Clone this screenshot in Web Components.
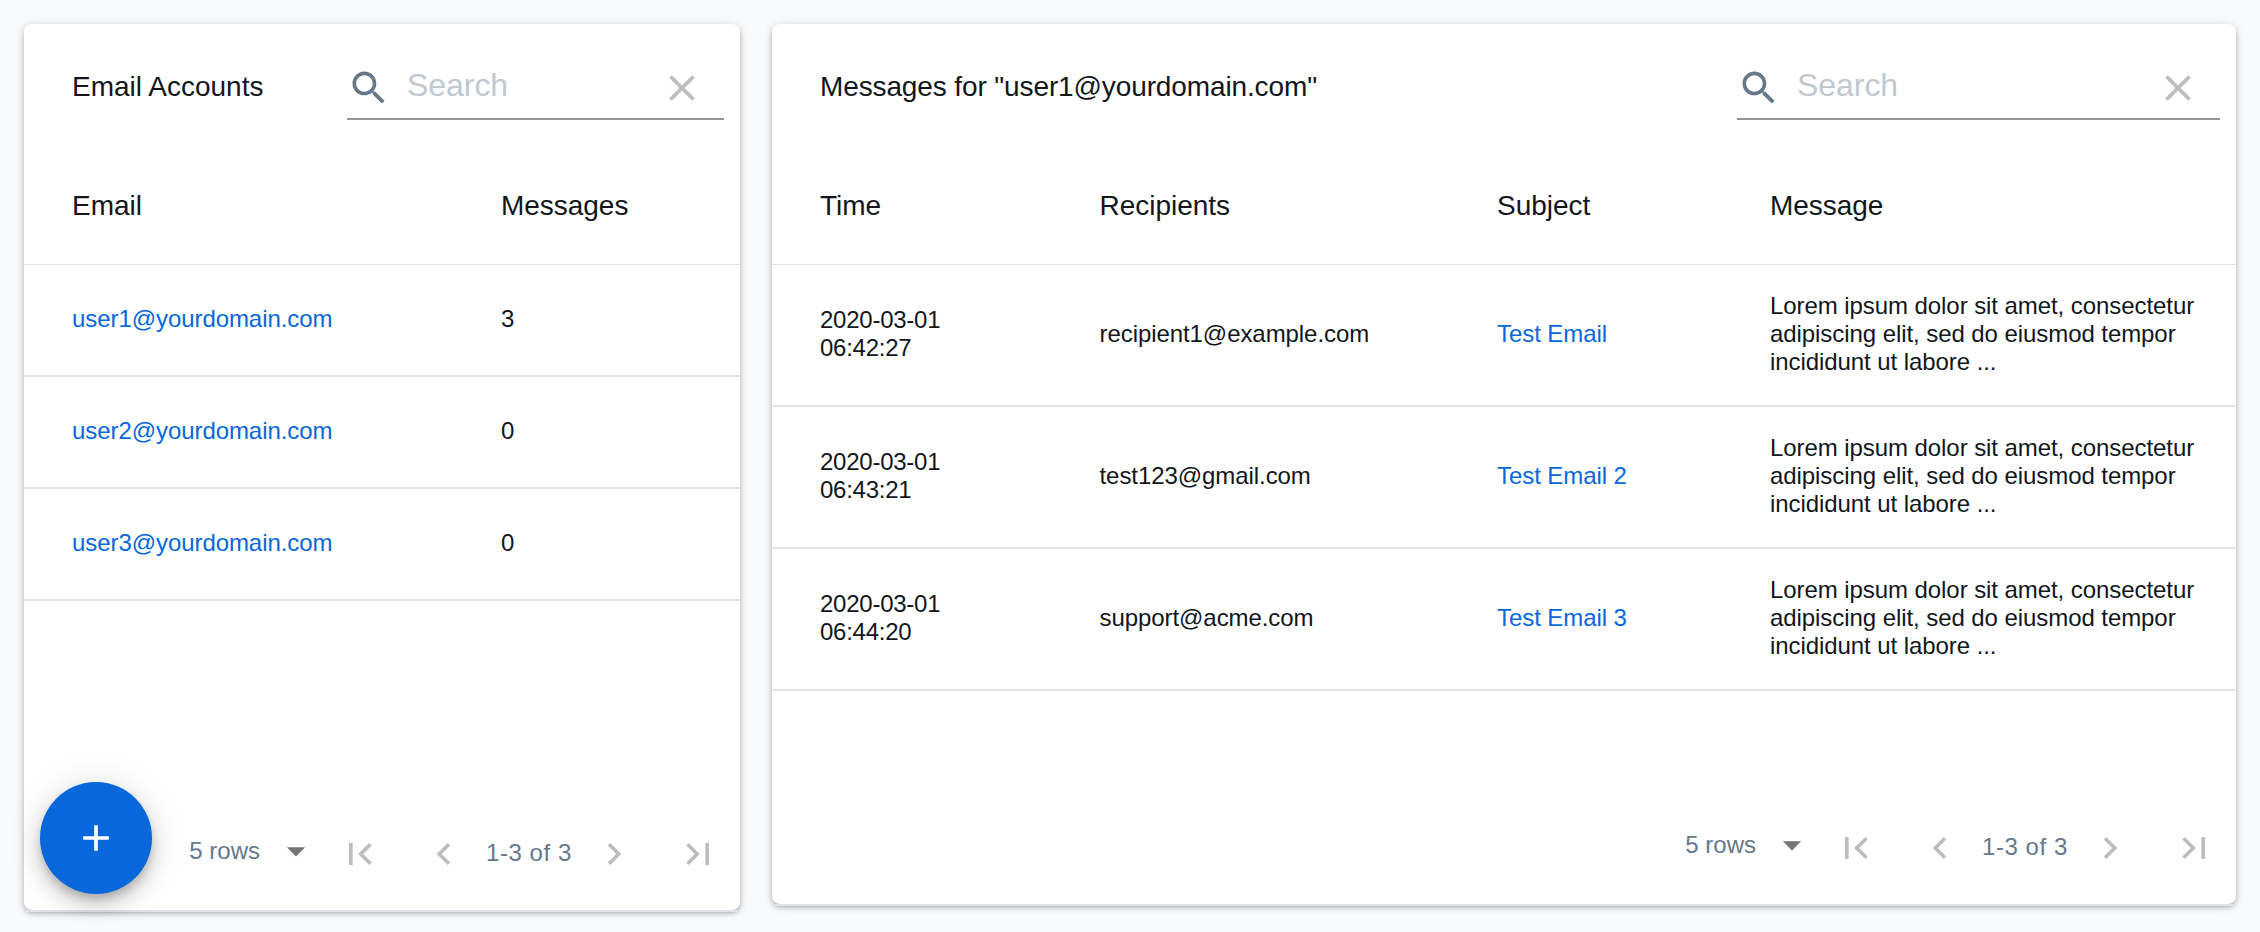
<!DOCTYPE html>
<html lang="en">
<head>
<meta charset="utf-8">
<title>Mail Dashboard</title>
<style>
  html, body { margin: 0; height: 100%; background: #f9fafc; }
  body { font-family: "Liberation Sans", Arial, sans-serif; color: #12161b; }
</style>
</head>
<body>
<mail-dashboard></mail-dashboard>
<script>
const ICONS = {
  search: 'M15.5 14h-.79l-.28-.27C15.41 12.59 16 11.11 16 9.5 16 5.91 13.09 3 9.5 3S3 5.91 3 9.5 5.91 16 9.5 16c1.61 0 3.09-.59 4.23-1.57l.27.28v.79l5 4.99L20.49 19l-4.99-5zm-6 0C7.01 14 5 11.99 5 9.5S7.01 5 9.5 5 14 7.01 14 9.5 11.99 14 9.5 14z',
  clear: 'M19 6.41L17.59 5 12 10.59 6.41 5 5 6.41 10.59 12 5 17.59 6.41 19 12 13.41 17.59 19 19 17.59 13.41 12z',
  add: 'M19 13h-6v6h-2v-6H5v-2h6V5h2v6h6v2z',
  caret: 'M7 10l5 5 5-5z',
  first: 'M18.41 16.59L13.82 12l4.59-4.59L17 6l-6 6 6 6zM6 6h2v12H6z',
  prev: 'M15.41 7.41L14 6l-6 6 6 6 1.41-1.41L10.83 12z',
  next: 'M10 6L8.59 7.41 13.17 12l-4.58 4.59L10 18l6-6z',
  last: 'M5.59 7.41L10.18 12l-4.59 4.59L7 18l6-6-6-6zM16 6h2v12h-2z'
};

function define(name, render) {
  customElements.define(name, class extends HTMLElement {
    connectedCallback() {
      if (this.shadowRoot) return;
      this.attachShadow({ mode: 'open' }).innerHTML = render(this);
    }
  });
}

define('md-icon', el => `
  <style>
    :host { display: block; width: 44px; height: 44px; flex: none; color: #bdbdbd; }
    svg { display: block; width: 100%; height: 100%; fill: currentColor; }
  </style>
  <svg viewBox="0 0 24 24"><path d="${ICONS[el.getAttribute('name')]}"/></svg>`);

define('search-field', () => `
  <style>
    :host { display: flex; box-sizing: border-box; height: 66px; border-bottom: 2px solid #949494; padding: 12px 20px 0 0; align-items: flex-start; }
    .lens { color: #66788a; margin-right: 16px; }
    .hint { flex: 1; font-size: 32px; line-height: 38px; letter-spacing: -.05px; color: #c0c8d0; }
  </style>
  <md-icon class="lens" name="search"></md-icon>
  <span class="hint">Search</span>
  <md-icon name="clear"></md-icon>`);

define('data-row', () => `
  <style>
    :host { display: grid; grid-template-columns: var(--columns); align-items: center; box-sizing: border-box;
      height: var(--row-height); padding: 0 0 2px 48px; border-bottom: 2px solid #dfe3e8; font-size: 24px; line-height: 28px; letter-spacing: -.07px; }
    :host([head]) { height: 119px; border-bottom-width: 1px; font-size: 28px; line-height: 32px; padding: 2px 0 0 48px; letter-spacing: -.03px; }
    ::slotted(a) { color: #0767db; text-decoration: none; }
    ::slotted(.time) { letter-spacing: -.25px; }
    ::slotted(*) { white-space: pre-line; }
  </style>
  <slot></slot>`);

define('table-pager', () => `
  <style>
    :host { display: flex; justify-content: flex-end; align-items: flex-start; box-sizing: border-box; height: 80px; margin-bottom: -2px; border-bottom: 2px solid #dfe3e8;
      padding-right: 20px; color: #66788a; font-size: 24px; line-height: 28px; }
    .rows { margin: 5px 14px 0 0; }
    .caret { color: #757575; margin: -3px 20px 0 0; }
    .wide { margin-right: 40px; }
    .range { box-sizing: border-box; width: 126px; padding-left: 20px; margin-top: 7px; letter-spacing: .55px; }
  </style>
  <span class="rows">5 rows</span>
  <md-icon class="caret" name="caret"></md-icon>
  <md-icon class="wide" name="first"></md-icon>
  <md-icon name="prev"></md-icon>
  <span class="range">1-3 of 3</span>
  <md-icon class="wide" name="next"></md-icon>
  <md-icon name="last"></md-icon>`);

define('fab-button', () => `
  <style>
    :host { display: flex; align-items: center; justify-content: center; width: 112px; height: 112px; border-radius: 50%; background: #0767db;
      box-shadow: 0 6px 10px -2px rgba(0,0,0,.2), 0 12px 20px 0 rgba(0,0,0,.14), 0 2px 36px 0 rgba(0,0,0,.12); }
    md-icon { color: #fff; }
  </style>
  <md-icon name="add"></md-icon>`);

define('table-card', el => `
  <style>
    :host { display: flex; flex-direction: column; position: relative; box-sizing: border-box; background: #fff; border-radius: 8px;
      box-shadow: 0 2px 10px 0 rgba(0,0,0,.2), 0 4px 4px 0 rgba(0,0,0,.14), 0 6px 2px -4px rgba(0,0,0,.12); }
    header { display: flex; justify-content: space-between; height: 122px; box-sizing: border-box; padding: 30px 16px 0 48px; }
    h2 { margin: 16px 0 0; font-size: 28px; line-height: 34px; font-weight: 400; letter-spacing: var(--title-spacing, 0); }
    search-field { width: var(--search-width); }
    .body { flex: 1; }
  </style>
  <header><h2>${el.getAttribute('heading')}</h2><search-field></search-field></header>
  <div class="body"><slot></slot></div>
  <table-pager></table-pager>
  <slot name="action"></slot>`);

const accounts = [['user1@yourdomain.com', 3], ['user2@yourdomain.com', 0], ['user3@yourdomain.com', 0]];
const messages = [
  ['2020-03-01\n06:42:27', 'recipient1@example.com', 'Test Email'],
  ['2020-03-01\n06:43:21', 'test123@gmail.com', 'Test Email 2'],
  ['2020-03-01\n06:44:20', 'support@acme.com', 'Test Email 3']
];
const excerpt = 'Lorem ipsum dolor sit amet, consectetur\nadipiscing elit, sed do eiusmod tempor\nincididunt ut labore ...';

define('mail-dashboard', () => `
  <style>
    :host { display: grid; grid-template-columns: 716px 1464px; gap: 32px; padding: 24px; align-items: start; box-sizing: border-box; height: 932px; }
    .accounts { height: 886px; --search-width: 377px; --columns: 429px 1fr; --row-height: 112px; }
    .messages { height: 880px; --search-width: 483px; --columns: 279.5px 397.5px 273px 1fr; --row-height: 142px; --title-spacing: -.12px; }
    fab-button { position: absolute; left: 16px; bottom: 16px; }
  </style>
  <table-card class="accounts" heading="Email Accounts">
    <data-row head><span>Email</span><span>Messages</span></data-row>
    ${accounts.map(([mail, n]) => `<data-row><a>${mail}</a><span>${n}</span></data-row>`).join('')}
    <fab-button slot="action"></fab-button>
  </table-card>
  <table-card class="messages" heading="Messages for &quot;user1@yourdomain.com&quot;">
    <data-row head><span>Time</span><span>Recipients</span><span>Subject</span><span>Message</span></data-row>
    ${messages.map(([time, to, subject]) => `<data-row><span class="time">${time}</span><span>${to}</span><a>${subject}</a><span>${excerpt}</span></data-row>`).join('')}
  </table-card>`);
</script>
</body>
</html>
